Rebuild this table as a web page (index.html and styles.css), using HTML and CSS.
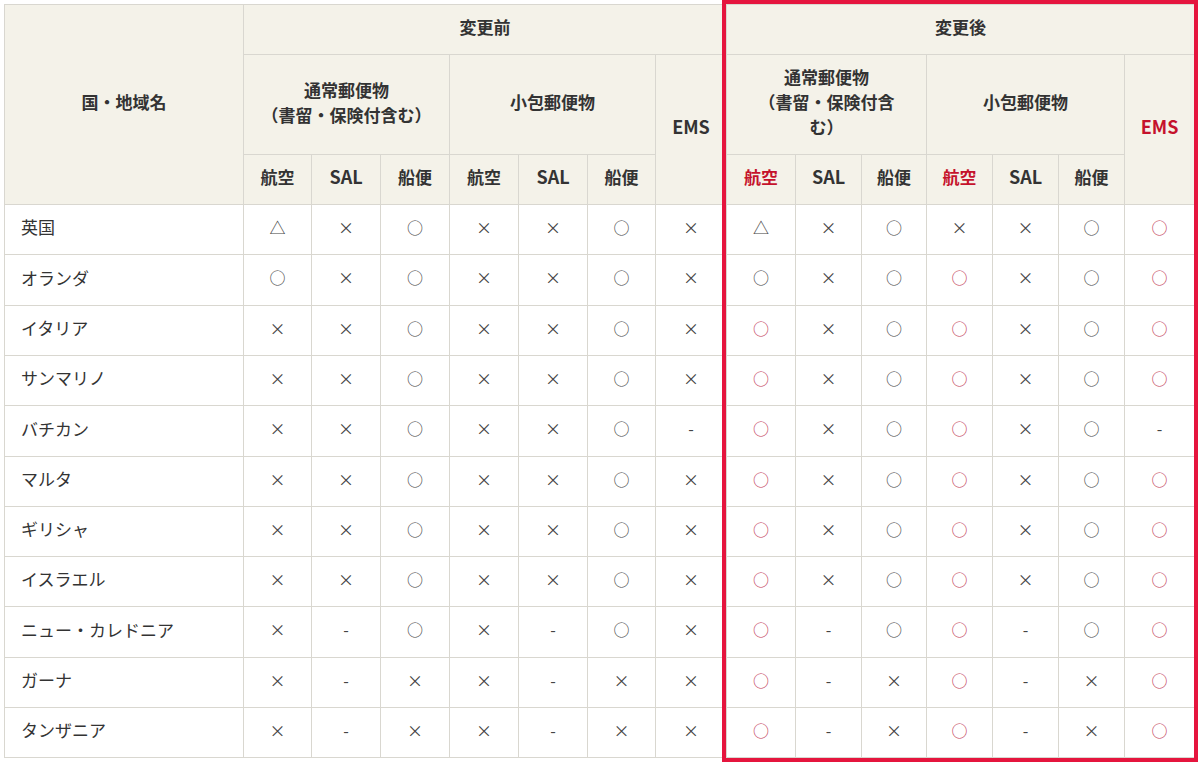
FILE: index.html
```html
<!DOCTYPE html>
<html lang="ja">
<head>
<meta charset="utf-8">
<title>変更前・変更後</title>
<link rel="stylesheet" href="styles.css">
</head>
<body>
<div class="wrap">
<table class="tbl">
<colgroup>
<col class="c-name"><col class="c68"><col class="c69"><col class="c69"><col class="c69"><col class="c69"><col class="c68"><col class="c71">
<col class="c69"><col class="c66"><col class="c65"><col class="c66"><col class="c66"><col class="c66"><col class="c70">
</colgroup>
<thead>
<tr class="h1">
<th rowspan="3">国・地域名</th>
<th colspan="7">変更前</th>
<th colspan="7">変更後</th>
</tr>
<tr class="h2">
<th colspan="3">通常郵便物<br>（書留・保険付含む）</th>
<th colspan="3">小包郵便物</th>
<th rowspan="2" class="lat">EMS</th>
<th colspan="3">通常郵便物<br>（書留・保険付含<br>む）</th>
<th colspan="3">小包郵便物</th>
<th rowspan="2" class="lat red">EMS</th>
</tr>
<tr class="h3">
<th>航空</th><th class="lat">SAL</th><th>船便</th>
<th>航空</th><th class="lat">SAL</th><th>船便</th>
<th class="red">航空</th><th class="lat">SAL</th><th>船便</th>
<th class="red">航空</th><th class="lat">SAL</th><th>船便</th>
</tr>
</thead>
<tbody>
<tr class="ra"><td>英国</td><td>△</td><td>×</td><td>○</td><td>×</td><td>×</td><td>○</td><td>×</td><td>△</td><td>×</td><td>○</td><td>×</td><td>×</td><td>○</td><td class="r">○</td></tr>
<tr class="rb"><td>オランダ</td><td>○</td><td>×</td><td>○</td><td>×</td><td>×</td><td>○</td><td>×</td><td>○</td><td>×</td><td>○</td><td class="r">○</td><td>×</td><td>○</td><td class="r">○</td></tr>
<tr class="ra"><td>イタリア</td><td>×</td><td>×</td><td>○</td><td>×</td><td>×</td><td>○</td><td>×</td><td class="r">○</td><td>×</td><td>○</td><td class="r">○</td><td>×</td><td>○</td><td class="r">○</td></tr>
<tr class="ra"><td>サンマリノ</td><td>×</td><td>×</td><td>○</td><td>×</td><td>×</td><td>○</td><td>×</td><td class="r">○</td><td>×</td><td>○</td><td class="r">○</td><td>×</td><td>○</td><td class="r">○</td></tr>
<tr class="rb"><td>バチカン</td><td>×</td><td>×</td><td>○</td><td>×</td><td>×</td><td>○</td><td>-</td><td class="r">○</td><td>×</td><td>○</td><td class="r">○</td><td>×</td><td>○</td><td>-</td></tr>
<tr class="ra"><td>マルタ</td><td>×</td><td>×</td><td>○</td><td>×</td><td>×</td><td>○</td><td>×</td><td class="r">○</td><td>×</td><td>○</td><td class="r">○</td><td>×</td><td>○</td><td class="r">○</td></tr>
<tr class="ra"><td>ギリシャ</td><td>×</td><td>×</td><td>○</td><td>×</td><td>×</td><td>○</td><td>×</td><td class="r">○</td><td>×</td><td>○</td><td class="r">○</td><td>×</td><td>○</td><td class="r">○</td></tr>
<tr class="ra"><td>イスラエル</td><td>×</td><td>×</td><td>○</td><td>×</td><td>×</td><td>○</td><td>×</td><td class="r">○</td><td>×</td><td>○</td><td class="r">○</td><td>×</td><td>○</td><td class="r">○</td></tr>
<tr class="rb"><td>ニュー・カレドニア</td><td>×</td><td>-</td><td>○</td><td>×</td><td>-</td><td>○</td><td>×</td><td class="r">○</td><td>-</td><td>○</td><td class="r">○</td><td>-</td><td>○</td><td class="r">○</td></tr>
<tr class="ra"><td>ガーナ</td><td>×</td><td>-</td><td>×</td><td>×</td><td>-</td><td>×</td><td>×</td><td class="r">○</td><td>-</td><td>×</td><td class="r">○</td><td>-</td><td>×</td><td class="r">○</td></tr>
<tr class="ra"><td>タンザニア</td><td>×</td><td>-</td><td>×</td><td>×</td><td>-</td><td>×</td><td>×</td><td class="r">○</td><td>-</td><td>×</td><td class="r">○</td><td>-</td><td>×</td><td class="r">○</td></tr>
</tbody>
</table>
<div class="highlight"></div>
</div>
</body>
</html>
```

FILE: styles.css
```css
html, body {
  margin: 0;
  padding: 0;
  background: #ffffff;
}

body {
  font-family: "Noto Sans CJK JP", "Noto Sans", sans-serif;
  color: #333333;
}

.wrap {
  position: relative;
  padding: 4px 0 0 4px;
  width: 1196px;
  height: 760px;
}

.tbl {
  border-collapse: collapse;
  table-layout: fixed;
  width: 1190px;
  font-size: 17px;
}

.c-name { width: 239px; }
.c65 { width: 65px; }
.c66 { width: 66px; }
.c68 { width: 68px; }
.c69 { width: 69px; }
.c70 { width: 70px; }
.c71 { width: 71px; }

.tbl th,
.tbl td {
  border: 1px solid #d9d7d0;
  padding: 0 0 6px 0;
  text-align: center;
  vertical-align: middle;
}

.tbl th {
  background: #f4f2e9;
  font-weight: bold;
  line-height: 25px;
  color: #333333;
}

.tbl th.lat {
  font-size: 18px;
}

.h1 { height: 50px; }
.h2 { height: 100px; }
.h3 { height: 50px; }

.tbl th.red { color: #c5122c; }

.tbl td {
  font-size: 16px;
  color: #444444;
}

.tbl td:first-child {
  text-align: left;
  padding-left: 16px;
  font-size: 17px;
  color: #333333;
}

.ra { height: 50px; }
.rb { height: 51px; }

.tbl td.r { color: #c23a55; }

.highlight {
  position: absolute;
  left: 722px;
  top: 0;
  width: 468px;
  height: 754px;
  border: 4px solid #e5153e;
  pointer-events: none;
}
```
